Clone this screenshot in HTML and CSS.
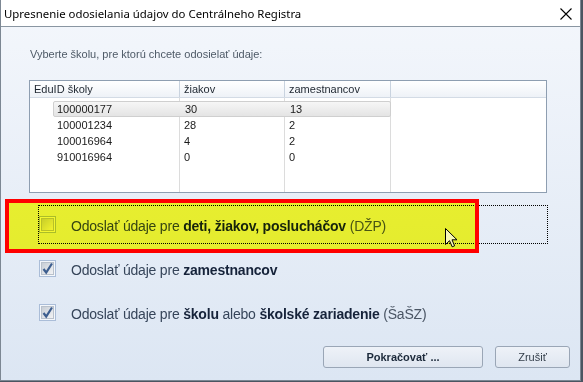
FILE: index.html
```html
<!DOCTYPE html>
<html lang="sk">
<head>
  <meta charset="UTF-8">
  <title>Upresnenie odosielania</title>
  <link rel="stylesheet" href="styles.css">
</head>
<body>

  <div class="window">
    <!-- Title bar -->
    <div class="titlebar">
      <span class="title">Upresnenie odosielania údajov do Centrálneho Registra</span>
      <svg class="close" width="12" height="12" viewBox="0 0 12 12">
        <path d="M0.5 0.5 L11.5 11.5 M11.5 0.5 L0.5 11.5" stroke="#000" stroke-width="1.1" fill="none"/>
      </svg>
    </div>

    <div class="content">
      <p class="prompt">Vyberte školu, pre ktorú chcete odosielať údaje:</p>

      <!-- School list -->
      <div class="list">
        <div class="list-head">
          <div>EduID školy</div>
          <div>žiakov</div>
          <div>zamestnancov</div>
          <div></div>
        </div>
        <div class="list-body">
          <div class="list-row selected"><div>100000177</div><div>30</div><div>13</div></div>
          <div class="list-row"><div>100001234</div><div>28</div><div>2</div></div>
          <div class="list-row"><div>100016964</div><div>4</div><div>2</div></div>
          <div class="list-row"><div>910016964</div><div>0</div><div>0</div></div>
        </div>
      </div>

      <!-- Options -->
      <div class="options">
        <div class="option focused">
          <span class="box"></span>
          <span class="label">Odoslať údaje pre <b>deti, žiakov, poslucháčov</b> <span class="abbr">(DŽP)</span></span>
          <span class="marker"></span>
          <svg class="pointer" width="13" height="20" viewBox="0 0 13 20">
            <path d="M0.5 0.5 L0.5 16.5 L4.5 12.7 L7.2 18.8 L9.6 17.8 L7 11.8 L12 11.8 Z" fill="#f6f7b4" stroke="#000" stroke-width="1"/>
          </svg>
        </div>
        <div class="option">
          <span class="box checked">
            <svg width="13" height="13" viewBox="0 0 13 13"><path d="M2.5 7 L5.2 10.5 L11 1.5" stroke="#3d5e8f" stroke-width="2.2" fill="none"/></svg>
          </span>
          <span class="label">Odoslať údaje pre <b>zamestnancov</b></span>
        </div>
        <div class="option">
          <span class="box checked">
            <svg width="13" height="13" viewBox="0 0 13 13"><path d="M2.5 7 L5.2 10.5 L11 1.5" stroke="#3d5e8f" stroke-width="2.2" fill="none"/></svg>
          </span>
          <span class="label">Odoslať údaje pre <b>školu</b> alebo <b>školské zariadenie</b> <span class="abbr">(ŠaŠZ)</span></span>
        </div>
      </div>

      <div class="buttons">
        <button class="btn primary">Pokračovať ...</button>
        <button class="btn">Zrušiť</button>
      </div>
    </div>
  </div>

</body>
</html>
```

FILE: styles.css
```css
/* Page */
body {
  margin: 0;
  background-color: #4b5561;
  font-family: 'Liberation Sans', Arial, sans-serif;
}

/* Dialog window */
.window {
  width: 581px;
  height: 381px;
  box-sizing: border-box;
  border: 1px solid #7c8793;
  border-top: none;
  display: flex;
  flex-direction: column;
  background: linear-gradient(#f4f7fc, #dce6f3);
}

.titlebar {
  height: 26px;
  flex-shrink: 0;
  background-color: #fff;
  border-bottom: 1px solid #8a96a2;
  display: flex;
  align-items: center;
  justify-content: space-between;
  padding: 0 8px 0 3px;
}

.titlebar .title {
  font-family: 'Noto Sans', sans-serif;
  font-size: 11.4px;
  color: #000;
  margin-top: 1px;
}

.titlebar .close {
  display: block;
  margin-top: 1px;
}

.content {
  flex: 1;
  display: flex;
  flex-direction: column;
  padding: 0 10px 0 28px;
}

.prompt {
  margin: 21px 0 19px 1px;
  font-size: 11px;
  line-height: 13px;
  color: #4e5a67;
}

/* List view */
.list {
  width: 518px;
  height: 113px;
  box-sizing: border-box;
  border: 1px solid #8e9eb1;
  background-color: #fff;
  font-size: 11px;
}

.list-head {
  display: grid;
  grid-template-columns: 150px 105px 106px 1fr;
  height: 17px;
  box-sizing: border-box;
  border-bottom: 1px solid #d3dbe5;
  background: linear-gradient(#ffffff, #eef2f7);
}

.list-head div {
  border-right: 1px solid #c9d3df;
  padding-left: 4px;
  line-height: 16px;
  color: #1e2630;
}

.list-head div:last-child {
  border-right: none;
}

.list-body {
  height: 94px;
  padding-top: 3px;
  box-sizing: border-box;
  background-image:
    linear-gradient(to right,
      transparent 149px, #dcdcdc 149px, #dcdcdc 150px,
      transparent 150px, transparent 254px, #dcdcdc 254px, #dcdcdc 255px,
      transparent 255px, transparent 360px, #dcdcdc 360px, #dcdcdc 361px,
      transparent 361px);
}

.list-row {
  display: grid;
  grid-template-columns: 127px 105px 106px;
  margin-left: 23px;
  width: 338px;
  height: 16px;
  box-sizing: border-box;
  line-height: 16px;
  color: #1a1a1a;
}

.list-row div {
  padding-left: 4px;
}

.list-row.selected {
  background: linear-gradient(#f6f6f6, #e4e4e4);
  border: 1px solid #cfcfcf;
  border-radius: 2px;
  line-height: 14px;
}

.list-row.selected div:first-child {
  padding-left: 3px;
}

/* Checkbox options */
.options {
  margin-top: 12px;
  display: flex;
  flex-direction: column;
  gap: 5px;
}

.option {
  position: relative;
  margin-left: 9px;
  width: 510px;
  height: 39px;
  box-sizing: border-box;
  border: 1px dotted transparent;
  display: flex;
  align-items: center;
  gap: 15px;
  font-size: 14px;
  letter-spacing: -0.2px;
  color: #36455a;
}

.option.focused {
  border-color: #000;
}

.option .label {
  margin-top: 3px;
}

.option b {
  color: #16233a;
}

.option .abbr {
  color: #4a5564;
}

.box {
  width: 17px;
  height: 17px;
  box-sizing: border-box;
  border: 1px solid #aabdd8;
  padding: 1px;
  flex-shrink: 0;
  background: #f4f7fb;
  display: flex;
  align-items: center;
  justify-content: center;
  position: relative;
}

.box::before {
  content: '';
  position: absolute;
  inset: 1px;
  border: 1px solid #b9c1cb;
  background: linear-gradient(135deg, #c8ced6, #f2f3f5);
}

.box svg {
  position: relative;
  display: block;
}

.option.focused .box {
  margin-top: -1px;
}

/* Yellow marker annotation */
.marker {
  position: absolute;
  left: -34px;
  top: -7px;
  width: 474px;
  height: 54px;
  box-sizing: border-box;
  border: 4px solid #ff0000;
}

.marker::before {
  content: '';
  position: absolute;
  inset: 0;
  background-color: #ffff30;
  mix-blend-mode: multiply;
}

.pointer {
  position: absolute;
  left: 406px;
  top: 22px;
}

/* Buttons */
.buttons {
  margin-top: 14px;
  display: flex;
  justify-content: flex-end;
  gap: 12px;
}

.btn {
  height: 22px;
  box-sizing: border-box;
  border: 1px solid #9aa6b6;
  border-radius: 3px;
  background: linear-gradient(#eef2f8, #dfe6f0);
  font-family: 'Liberation Sans', Arial, sans-serif;
  font-size: 11px;
  color: #333e4a;
  padding: 0;
  width: 75px;
}

.btn.primary {
  width: 160px;
  font-weight: bold;
  color: #1b293a;
}
```
